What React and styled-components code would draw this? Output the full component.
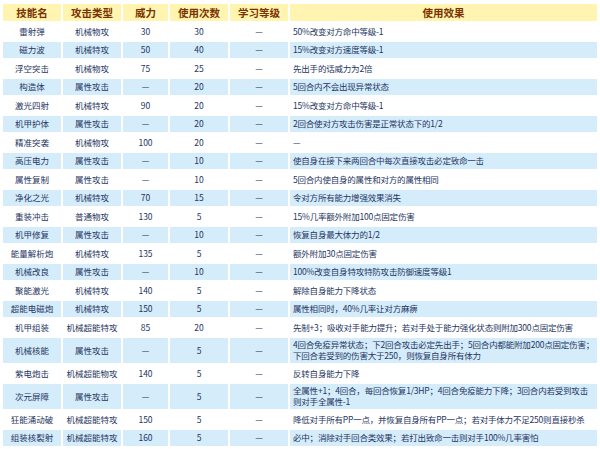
import React from 'react';
import styled, { createGlobalStyle } from 'styled-components';

const Global = createGlobalStyle`
  body { margin: 0; background: #fff; font-family: "Noto Sans CJK SC", "Noto Sans", sans-serif; }
`;

const rows = [
  ['雷射弹', '机械物攻', '30', '30', '50%改变对方命中等级-1'],
  ['磁力波', '机械特攻', '50', '40', '15%改变对方速度等级-1'],
  ['浮空突击', '机械物攻', '75', '25', '先出手的话威力为2倍'],
  ['构造体', '属性攻击', '—', '20', '5回合内不会出现异常状态'],
  ['激光四射', '机械特攻', '90', '20', '15%改变对方命中等级-1'],
  ['机甲护体', '属性攻击', '—', '20', '2回合使对方攻击伤害是正常状态下的1/2'],
  ['精准突袭', '机械物攻', '100', '20', '—'],
  ['高压电力', '属性攻击', '—', '10', '使自身在接下来两回合中每次直接攻击必定致命一击'],
  ['属性复制', '属性攻击', '—', '10', '5回合内使自身的属性和对方的属性相同'],
  ['净化之光', '机械特攻', '70', '15', '令对方所有能力增强效果消失'],
  ['重装冲击', '普通物攻', '130', '5', '15%几率额外附加100点固定伤害'],
  ['机甲修复', '属性攻击', '—', '10', '恢复自身最大体力的1/2'],
  ['能量解析炮', '机械特攻', '135', '5', '额外附加30点固定伤害'],
  ['机械改良', '属性攻击', '—', '10', '100%改变自身特攻特防攻击防御速度等级1'],
  ['聚能激光', '机械特攻', '140', '5', '解除自身能力下降状态'],
  ['超能电磁炮', '机械特攻', '150', '5', '属性相同时，40%几率让对方麻痹'],
  ['机甲组装', '机械超能特攻', '85', '20', '先制+3；吸收对手能力提升；若对手处于能力强化状态则附加300点固定伤害'],
  ['机械核能', '属性攻击', '—', '5', '4回合免疫异常状态；下2回合攻击必定先出手；5回合内都能附加200点固定伤害；下回合若受到的伤害大于250，则恢复自身所有体力', true],
  ['紫电炮击', '机械超能物攻', '140', '5', '反转自身能力下降'],
  ['次元屏障', '属性攻击', '—', '5', '全属性+1；4回合，每回合恢复1/3HP；4回合免疫能力下降；3回合内若受到攻击则对手全属性-1', true],
  ['狂能涌动破', '机械超能特攻', '150', '5', '降低对手所有PP一点，并恢复自身所有PP一点；若对手体力不足250则直接秒杀'],
  ['组装核裂射', '机械超能特攻', '160', '5', '必中；消除对手回合类效果；若打出致命一击则对手100%几率害怕'],
];

const Wrap = styled.div`
  padding: 2px 0 0 1px;
`;

const Table = styled.table`
  width: 598px;
  border-collapse: separate;
  border-spacing: 2px;
  table-layout: fixed;
`;

const Th = styled.th`
  height: 17px;
  padding: 0;
  background: #fff5b0;
  color: #7a3300;
  font-size: 10.5px;
  font-weight: bold;
  text-align: center;
  width: ${p => p.$w}px;
`;

const Td = styled.td`
  height: ${p => (p.$tall ? 25.5 : 16.5)}px;
  padding: ${p => (p.$left ? '0 3px' : '0')};
  background: ${p => (p.$alt ? '#d5ecfb' : '#fff')};
  color: #1e3560;
  font-size: 8.5px;
  line-height: 11px;
  letter-spacing: ${p => (p.$left ? '-0.2px' : '0')};
  text-align: ${p => (p.$left ? 'left' : 'center')};
  white-space: ${p => (p.$left ? 'normal' : 'nowrap')};
  overflow: hidden;
`;

export default function App() {
  return (
    <Wrap>
      <Global />
      <Table>
        <thead>
          <tr>
            <Th $w={58}>技能名</Th>
            <Th $w={58}>攻击类型</Th>
            <Th $w={45}>威力</Th>
            <Th $w={58}>使用次数</Th>
            <Th $w={58}>学习等级</Th>
            <Th>使用效果</Th>
          </tr>
        </thead>
        <tbody>
          {rows.map((r, i) => {
            const alt = i % 2 === 1;
            return (
              <tr key={i}>
                <Td $alt={alt} $tall={r[5]}>{r[0]}</Td>
                <Td $alt={alt} $tall={r[5]}>{r[1]}</Td>
                <Td $alt={alt} $tall={r[5]}>{r[2]}</Td>
                <Td $alt={alt} $tall={r[5]}>{r[3]}</Td>
                <Td $alt={alt} $tall={r[5]}>—</Td>
                <Td $alt={alt} $tall={r[5]} $left>{r[4]}</Td>
              </tr>
            );
          })}
        </tbody>
      </Table>
    </Wrap>
  );
}
